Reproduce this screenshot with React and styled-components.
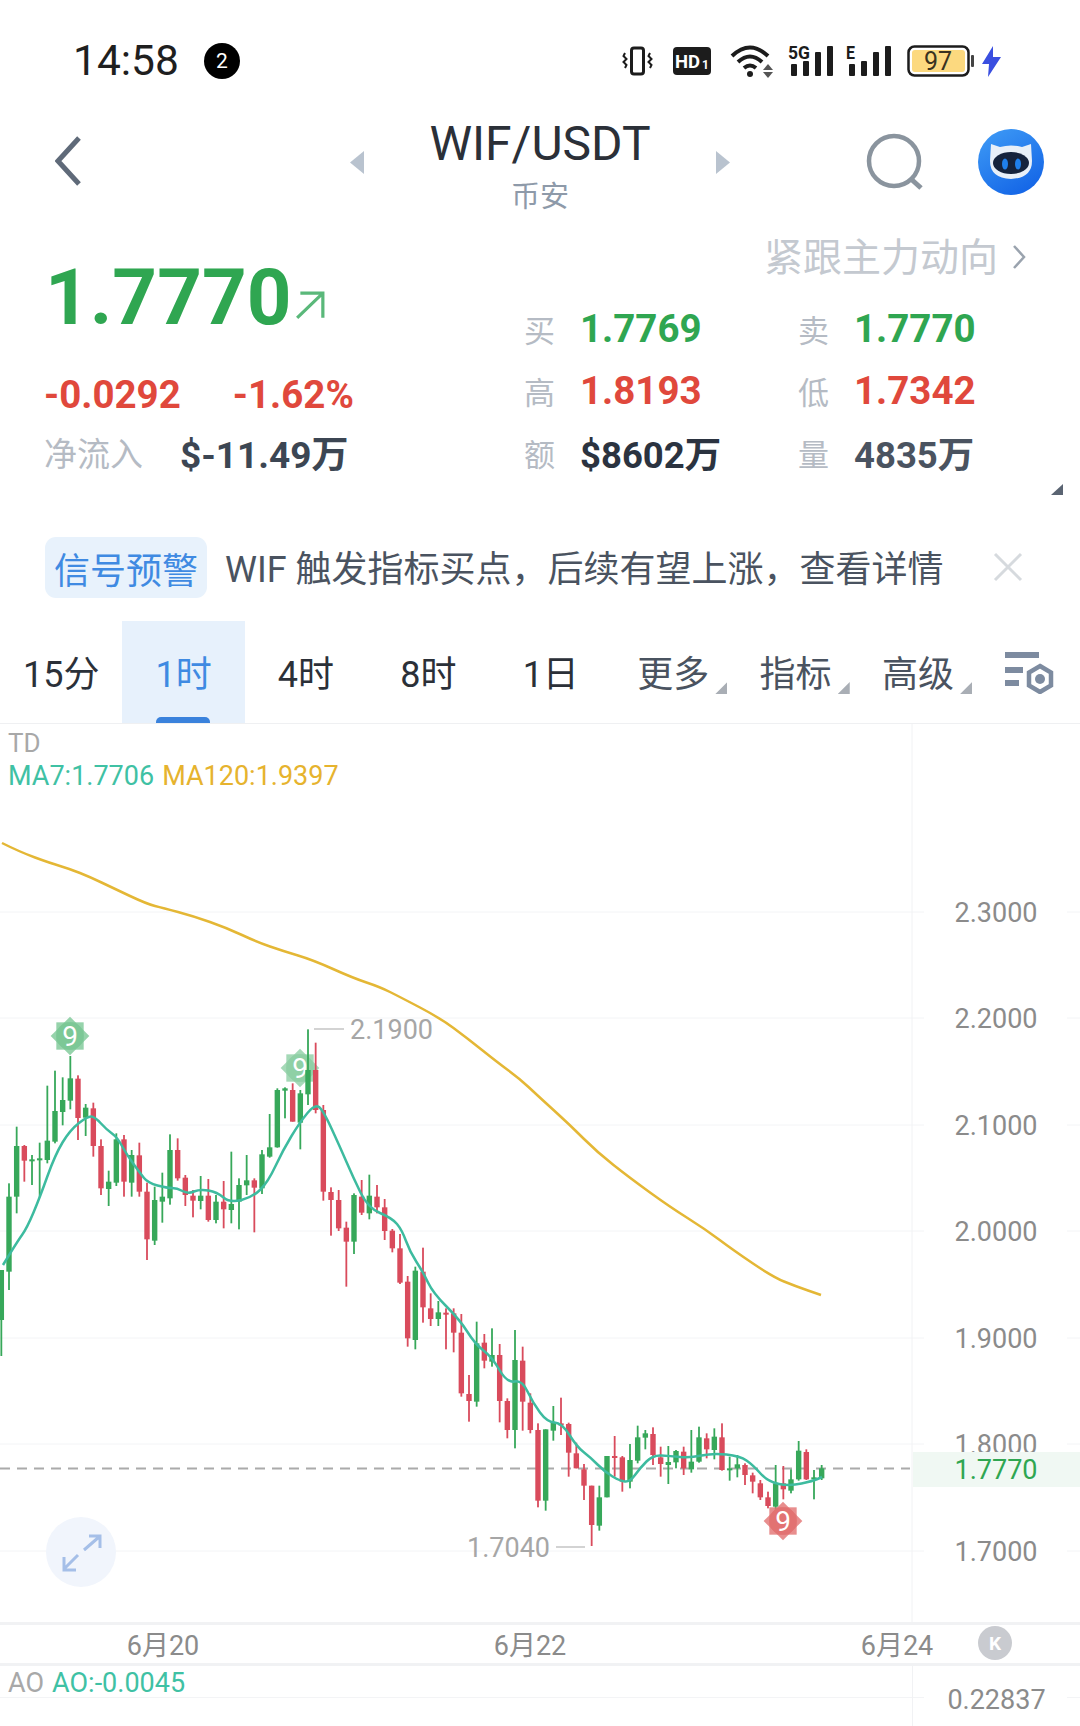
import React from "react";
import styled, { createGlobalStyle } from "styled-components";

const FONT = `Roboto, "Noto Sans CJK SC", sans-serif`;
const GREEN = "#2fa651";
const RED = "#e0483c";
const CANDLE_GREEN = "#37a85a";
const CANDLE_RED = "#d94b5c";

const GlobalStyle = createGlobalStyle`
    html, body {
        margin: 0;
        background: #fff;
        font-family: ${FONT};
    }
`;

// wick top, body top, body bottom, wick bottom, measured from the chart
const LEFT_CANDLES = [
    ["g", 810, 810, 960, 1068], ["g", 550, 590, 815, 870], ["g", 380, 438, 590, 640], ["r", 435, 438, 482, 545],
    ["g", 465, 478, 484, 555], ["g", 428, 475, 479, 590], ["g", 257, 422, 480, 490], ["g", 212, 333, 425, 430],
    ["g", 232, 300, 336, 376], ["g", 168, 235, 302, 328], ["r", 226, 236, 354, 420], ["g", 312, 323, 353, 408],
    ["r", 308, 325, 438, 470], ["r", 418, 438, 565, 585], ["g", 512, 545, 567, 618], ["g", 400, 418, 548, 558],
    ["r", 405, 418, 545, 590], ["g", 450, 465, 548, 590], ["r", 428, 466, 575, 590], ["r", 548, 575, 718, 780],
    ["g", 560, 600, 722, 735], ["g", 518, 590, 605, 668], ["g", 403, 450, 595, 614], ["r", 415, 450, 535, 542],
    ["r", 525, 533, 585, 618], ["r", 570, 587, 602, 652], ["g", 528, 587, 603, 628], ["r", 537, 587, 660, 665],
    ["g", 585, 605, 660, 670], ["r", 543, 605, 628, 685], ["g", 455, 612, 630, 670], ["g", 535, 555, 605, 688],
    ["g", 465, 541, 556, 585], ["r", 535, 541, 563, 697], ["g", 450, 463, 565, 582], ["g", 342, 442, 470, 473],
    ["g", 265, 270, 442, 443], ["g", 262, 265, 272, 355], ["r", 250, 270, 365, 365], ["g", 270, 280, 368, 448],
    ["g", 88, 210, 283, 315], ["r", 128, 210, 330, 340], ["r", 315, 330, 575, 602], ["r", 562, 576, 600, 707],
    ["r", 570, 600, 685, 693], ["r", 665, 683, 725, 860], ["g", 580, 585, 725, 762], ["r", 540, 590, 638, 645],
    ["g", 524, 587, 640, 658], ["r", 555, 590, 622, 640], ["r", 597, 622, 693, 720], ["r", 687, 692, 745, 757],
    ["r", 702, 745, 848, 852],
];

const RIGHT_CANDLES = [
    ["r", 168, 185, 355, 380], ["g", 140, 152, 360, 388], ["r", 83, 155, 262, 308], ["r", 220, 265, 297, 318],
    ["g", 243, 277, 297, 318], ["r", 265, 278, 281, 388], ["r", 265, 280, 338, 397], ["r", 282, 338, 520, 530],
    ["r", 465, 522, 543, 605], ["g", 305, 370, 545, 560], ["r", 342, 368, 422, 445], ["g", 325, 405, 425, 440],
    ["r", 372, 405, 543, 607], ["r", 535, 543, 630, 655], ["g", 330, 420, 630, 685], ["r", 380, 422, 545, 632],
    ["r", 520, 548, 630, 640], ["r", 610, 630, 842, 862], ["g", 628, 628, 842, 872], ["g", 558, 608, 632, 662],
    ["r", 533, 610, 615, 645], ["r", 608, 612, 698, 770], ["r", 668, 700, 745, 745], ["r", 732, 748, 797, 840],
    ["r", 797, 797, 915, 978], ["g", 797, 832, 917, 932], ["g", 708, 708, 832, 832], ["r", 648, 708, 712, 770],
    ["r", 708, 712, 785, 815], ["g", 672, 720, 785, 805], ["g", 617, 652, 722, 730], ["g", 630, 640, 653, 688],
    ["r", 622, 642, 705, 735], ["r", 680, 712, 732, 770], ["g", 678, 726, 735, 792], ["g", 690, 693, 727, 745],
    ["r", 680, 695, 745, 765], ["g", 630, 725, 748, 758], ["g", 620, 652, 725, 728], ["r", 640, 655, 688, 715],
    ["g", 625, 650, 690, 718], ["r", 610, 652, 750, 752], ["g", 710, 745, 748, 782], ["g", 705, 733, 745, 772],
    ["r", 730, 735, 765, 795], ["r", 758, 766, 785, 820], ["r", 780, 790, 832, 840], ["r", 815, 832, 858, 865],
    ["g", 735, 790, 860, 880], ["r", 738, 790, 808, 838], ["g", 748, 778, 812, 820], ["g", 663, 692, 778, 782],
    ["r", 688, 696, 778, 780], ["g", 750, 772, 775, 838], ["g", 735, 745, 775, 780],
];

const candles = [
    ...LEFT_CANDLES.map(c => ({ c, base: 1000 })),
    ...RIGHT_CANDLES.map(c => ({ c, base: 1220 })),
].map(({ c, base }, i) => ({
    x: (4 + 23 * i) / 3,
    color: c[0] === "g" ? CANDLE_GREEN : CANDLE_RED,
    wickTop: base + c[1] / 3,
    bodyTop: base + c[2] / 3,
    bodyBottom: base + c[3] / 3,
    wickBottom: base + c[4] / 3,
}));

const MA7_LINE = [
    [3, 1265], [17, 1242], [27, 1228], [40, 1197], [55, 1155], [70, 1130], [88, 1116], [95, 1117], [107, 1130],
    [117, 1137], [127, 1155], [140, 1173], [148, 1183], [167, 1188], [177, 1188], [188, 1194], [200, 1189],
    [217, 1192], [230, 1203], [253, 1197], [268, 1182], [283, 1150], [300, 1122], [315, 1104], [323, 1110],
    [340, 1147], [353, 1177], [368, 1208], [392, 1218], [402, 1230], [410, 1252], [423, 1272], [433, 1293],
    [460, 1320], [475, 1344], [492, 1357], [507, 1383], [522, 1380], [533, 1403], [547, 1422], [562, 1423],
    [577, 1447], [590, 1457], [605, 1472], [620, 1481], [630, 1482], [640, 1468], [653, 1455], [670, 1456],
    [690, 1458], [713, 1453], [740, 1456], [753, 1465], [768, 1482], [790, 1486], [813, 1481], [822, 1477],
];

const MA120_LINE = [
    [2, 843], [20, 852], [50, 863], [70, 869], [90, 877], [113, 888], [147, 904], [163, 908], [193, 916],
    [227, 928], [257, 942], [283, 951], [313, 960], [353, 978], [380, 987], [400, 997], [440, 1018], [467, 1038],
    [497, 1062], [520, 1079], [537, 1095], [570, 1125], [597, 1152], [630, 1178], [670, 1207], [705, 1229],
    [733, 1250], [773, 1277], [795, 1286], [821, 1295],
];

const PRICE_TICKS = [
    ["2.3000", 912], ["2.2000", 1018], ["2.1000", 1125], ["2.0000", 1231],
    ["1.9000", 1338], ["1.8000", 1444], ["1.7000", 1551],
];

const TABS = [
    { label: "15分" }, { label: "1时", active: true }, { label: "4时" }, { label: "8时" }, { label: "1日" },
    { label: "更多", menu: true }, { label: "指标", menu: true }, { label: "高级", menu: true },
];

// midpoint smoothing so the averages don't look like polylines
function smoothPath(points) {
    let d = `M${points[0][0]} ${points[0][1]}`;
    for (let i = 1; i < points.length - 1; i++) {
        const mx = (points[i][0] + points[i + 1][0]) / 2;
        const my = (points[i][1] + points[i + 1][1]) / 2;
        d += ` Q${points[i][0]} ${points[i][1]} ${mx} ${my}`;
    }
    const last = points[points.length - 1];
    return `${d} L${last[0]} ${last[1]}`;
}

const Page = styled.div`
    width: 1080px;
    height: 1726px;
    overflow: hidden;
    background: #fff;
    color: #2b3340;
`;

const StatusBar = styled.div`
    height: 122px;
    display: flex;
    align-items: center;
    padding: 0 79px 0 73px;
    box-sizing: border-box;
`;

const Time = styled.span`
    font-size: 42.5px;
    color: #1f1f1f;
    line-height: 1;
`;

const NotifyDot = styled.span`
    width: 36px;
    height: 36px;
    margin-left: 25px;
    border-radius: 50%;
    background: #000;
    color: #fff;
    font-size: 21px;
    display: flex;
    align-items: center;
    justify-content: center;
`;

const StatusIcons = styled.div`
    margin-left: auto;
    display: flex;
    align-items: center;
`;

const StatusIcon = styled.svg`
    display: block;
    margin-left: ${props => props.$gap || 0}px;
    font-family: ${FONT};
`;

const SignalGlyph = styled(StatusIcon)`
    margin-top: -6px;
`;

const Nav = styled.div`
    height: 103px;
    display: grid;
    grid-template-columns: 350px 380px 350px;
    align-items: start;
`;

const NavLeft = styled.div`
    padding: 14px 0 0 55px;
`;

const NavCenter = styled.div`
    display: flex;
    justify-content: space-between;
    align-items: center;
`;

const NavTriangle = styled.span`
    width: 14px;
    height: 23px;
    margin-top: -12px;
    background: #b9c3cf;
    clip-path: ${props => props.$right
        ? "polygon(0 0, 100% 50%, 0 100%)"
        : "polygon(100% 0, 0 50%, 100% 100%)"};
`;

const Market = styled.div`
    text-align: center;
    margin-top: -1px;
`;

const Pair = styled.div`
    font-size: 48px;
    line-height: 46px;
    color: #2b3038;
`;

const Exchange = styled.div`
    font-size: 29px;
    line-height: 36px;
    margin-top: 12px;
    color: #8e9aa9;
`;

const NavRight = styled.div`
    display: flex;
    justify-content: flex-end;
    padding: 7px 36px 0 0;
`;

const NavIcon = styled.svg`
    display: block;
    margin-left: ${props => props.$gap || 0}px;
`;

const Quote = styled.div`
    position: relative;
    height: 285px;
    display: grid;
    grid-template-columns: 524px 1fr;
`;

const Summary = styled.div`
    padding: 28px 0 0 46px;
`;

const PriceRow = styled.div`
    display: flex;
    align-items: flex-end;
    height: 90px;
`;

const Price = styled.span`
    font-size: 78px;
    line-height: 90px;
    font-weight: 700;
    color: ${GREEN};
    margin-left: -1px;
`;

const PriceArrow = styled.svg`
    display: block;
    margin: 0 0 23px 4px;
`;

const ChangeRow = styled.div`
    display: flex;
    gap: 52px;
    margin: 29px 0 0 -2px;
    font-size: 38.5px;
    line-height: 46px;
    font-weight: 700;
    color: ${RED};
`;

const FlowRow = styled.div`
    display: flex;
    align-items: center;
    margin: 12px 0 0 -2px;
    height: 44px;
`;

const FlowLabel = styled.span`
    font-size: 33px;
    width: 136px;
    color: #b5bbc4;
`;

const FlowValue = styled.span`
    font-size: 37px;
    font-weight: 700;
    color: #3c4653;
`;

const Detail = styled.div`
    display: flex;
    flex-direction: column;
`;

const FollowLink = styled.div`
    display: flex;
    align-items: center;
    justify-content: flex-end;
    padding: 5px 54px 0 0;
    height: 48px;
    gap: 14px;
    font-size: 39px;
    color: #c4c9d0;
`;

const FollowChevron = styled.svg`
    display: block;
    margin-top: 5px;
`;

const StatGrid = styled.div`
    display: grid;
    grid-template-columns: 56px 218px 56px 1fr;
    grid-auto-rows: 62px;
    align-items: center;
    margin-top: 19px;
`;

const StatLabel = styled.span`
    font-size: 31px;
    color: #b5bbc4;
`;

const StatValue = styled.span`
    font-size: ${props => props.$small ? 36.5 : 38.5}px;
    font-weight: 700;
    color: ${props => props.$color};
`;

const ExpandCorner = styled.span`
    position: absolute;
    right: 17px;
    bottom: 15px;
    width: 12px;
    height: 11px;
    background: #5a6472;
    clip-path: polygon(100% 0, 100% 100%, 0 100%);
`;

const SignalBar = styled.div`
    height: 61px;
    margin-top: 27px;
    padding: 0 57px 0 45px;
    display: flex;
    align-items: center;
`;

const SignalBadge = styled.span`
    width: 162px;
    height: 61px;
    border-radius: 11px;
    background: #e8f2fc;
    color: #3f8ae2;
    font-size: 36px;
    display: flex;
    align-items: center;
    justify-content: center;
    white-space: nowrap;
`;

const SignalText = styled.span`
    margin-left: 18px;
    padding-bottom: 4px;
    font-size: 36px;
    color: #4a5360;
    white-space: nowrap;
`;

const SignalClose = styled.svg`
    display: block;
    margin: -2px 0 0 auto;
`;

const TabBar = styled.div`
    height: 102px;
    margin-top: 23px;
    display: flex;
    align-items: stretch;
    border-bottom: 1px solid #eff0f2;
`;

const Tab = styled.div`
    position: relative;
    width: 122.4px;
    padding-bottom: 3px;
    box-sizing: border-box;
    display: flex;
    align-items: center;
    justify-content: center;
    font-size: 36px;
    color: ${props => props.$active ? "#3f8ae2" : props.$menu ? "#4a5360" : "#2b3038"};
    background: ${props => props.$active ? "#e7f1fc" : "transparent"};
`;

const TabMarker = styled.span`
    position: absolute;
    left: 34px;
    bottom: 0;
    width: 54px;
    height: 6px;
    border-radius: 5px 5px 0 0;
    background: #3a82dc;
`;

const TabCorner = styled.span`
    position: absolute;
    right: 7px;
    bottom: 29px;
    width: 12px;
    height: 12px;
    background: #a9aeb5;
    clip-path: polygon(100% 0, 100% 100%, 0 100%);
`;

const ChartSettings = styled.svg`
    display: block;
    align-self: center;
    margin: 2px 0 0 26px;
`;

const ChartArea = styled.div`
    position: relative;
    height: 898px;
`;

const ChartSvg = styled.svg`
    display: block;
    font-family: ${FONT};
`;

const Legend = styled.div`
    position: absolute;
    left: 8px;
    top: 3px;
    font-size: 27px;
    line-height: 33px;
`;

const LegendTitle = styled.div`
    color: #a8a8a8;
    font-size: 26px;
`;

const LegendValue = styled.span`
    color: ${props => props.$color};
    margin-right: 8px;
`;

const ExpandButton = styled.div`
    position: absolute;
    left: 46px;
    top: 793px;
    width: 70px;
    height: 70px;
    border-radius: 50%;
    background: #f1f5fc;
`;

const TimeAxis = styled.div`
    height: 36px;
    border-top: 3px solid #f1f2f4;
    border-bottom: 3px solid #f1f2f4;
    padding: 0 0 2px 118px;
    box-sizing: content-box;
    margin-bottom: -2px;
    display: flex;
    align-items: center;
    gap: 277px;
`;

const TimeLabel = styled.span`
    width: 90px;
    flex: none;
    text-align: center;
    font-size: 27px;
    color: #8b8b8b;
    white-space: nowrap;
`;

const KButton = styled.span`
    flex: none;
    width: 34px;
    height: 34px;
    margin-left: -241px;
    border-radius: 50%;
    background: #c9cbd0;
    color: #fff;
    font-size: 19px;
    font-weight: 700;
    display: flex;
    align-items: center;
    justify-content: center;
`;

const AoPanel = styled.div`
    position: relative;
    height: 62px;
    display: grid;
    grid-template-columns: 912px 1fr;
`;

const AoRule = styled.span`
    position: absolute;
    top: 33px;
    left: ${props => props.$left}px;
    width: ${props => props.$width}px;
    height: 1px;
    background: #f3f4f6;
`;

const AoLegend = styled.div`
    padding: 2px 0 0 8px;
    font-size: 27px;
    line-height: 34px;
    color: #a8a8a8;
`;

const AoValue = styled.span`
    color: #3fc1a4;
    margin-left: 8px;
`;

const AoAxis = styled.div`
    border-left: 1px solid #f1f2f4;
    padding-top: 19px;
    text-align: center;
    font-size: 27px;
    line-height: 34px;
    color: #8b8b8b;
    position: relative;
`;

function VibrateIcon() {
    return (
        <StatusIcon width="31" height="33" viewBox="0 0 31 33">
            <rect x="9.5" y="3" width="12" height="26" rx="2.5" fill="none" stroke="#1c1c1c" strokeWidth="3" />
            <path d="M3 8 l-1.5 3 3 3 -3 3 3 3 -1.5 3" fill="none" stroke="#1c1c1c" strokeWidth="2" />
            <path d="M28 8 l-1.5 3 3 3 -3 3 3 3 -1.5 3" fill="none" stroke="#1c1c1c" strokeWidth="2" />
        </StatusIcon>
    );
}

function HdIcon() {
    return (
        <StatusIcon $gap={20} width="38" height="28" viewBox="0 0 38 28">
            <rect width="38" height="28" rx="4" fill="#1c1c1c" />
            <text x="2" y="21" fontSize="18.5" fontWeight="700" fill="#fff">HD</text>
            <text x="29" y="22" fontSize="12" fontWeight="700" fill="#fff">1</text>
        </StatusIcon>
    );
}

function WifiIcon() {
    return (
        <StatusIcon $gap={19} width="43" height="34" viewBox="0 0 43 34">
            <path d="M2 12 Q20 -5 38 12" fill="none" stroke="#1c1c1c" strokeWidth="4" />
            <path d="M8 18 Q20 7 32 18" fill="none" stroke="#1c1c1c" strokeWidth="4" />
            <path d="M14 24 Q20 19 26 24" fill="none" stroke="#1c1c1c" strokeWidth="4" />
            <circle cx="20" cy="30" r="3" fill="#1c1c1c" />
            <path d="M33 26 l5 -6 5 6z" fill="#555" />
            <path d="M33 28 l5 6 5 -6z" fill="#555" />
        </StatusIcon>
    );
}

function SignalIcon({ label, gap, width }) {
    const bars = [[3, 20], [15, 17], [27, 8], [39, 2]];
    return (
        <SignalGlyph $gap={gap} width={width} height="40" viewBox={`0 -6 ${width} 40`}>
            <text x="0" y="15" fontSize="19" fontWeight="700" fill="#1c1c1c" textLength={label === "E" ? 9 : 22} lengthAdjust="spacingAndGlyphs">{label}</text>
            {bars.map(([x, top]) => (
                <rect key={x} x={x} y={top} width="6" height={32 - top} rx="1" fill="#1c1c1c" />
            ))}
        </SignalGlyph>
    );
}

function BatteryIcon() {
    return (
        <StatusIcon $gap={15} width="67" height="32" viewBox="0 0 67 32">
            <rect x="1.5" y="1.5" width="60" height="29" rx="6" fill="#fff" stroke="#1c1c1c" strokeWidth="2.5" />
            <rect x="5" y="5" width="53" height="22" rx="3" fill="#fcd97f" />
            <rect x="64" y="10" width="3" height="12" rx="1" fill="#444" />
            <text x="31" y="25" fontSize="25" textAnchor="middle" fill="#3a3320">97</text>
        </StatusIcon>
    );
}

function BoltIcon() {
    return (
        <StatusIcon $gap={8} width="19" height="31" viewBox="0 0 19 31">
            <path d="M11 0 L0 18 H7 L6 31 L19 11 H11z" fill="#3a4fe0" />
        </StatusIcon>
    );
}

function BackIcon() {
    return (
        <NavIcon width="26" height="50" viewBox="0 0 26 50">
            <path d="M24 2 L3 25 L24 48" fill="none" stroke="#5f6a79" strokeWidth="5" />
        </NavIcon>
    );
}

function SearchIcon() {
    return (
        <NavIcon width="60" height="70" viewBox="0 0 60 70">
            <circle cx="28" cy="32" r="25" fill="none" stroke="#8a949e" strokeWidth="4.5" />
            <path d="M45 50 L55 59" fill="none" stroke="#8a949e" strokeWidth="5" />
        </NavIcon>
    );
}

function RobotAvatar() {
    return (
        <NavIcon $gap={52} width="66" height="66" viewBox="0 0 66 66">
            <defs>
                <linearGradient id="avatarFill" x1="0.2" y1="0" x2="0.8" y2="1">
                    <stop offset="0" stopColor="#3c98f5" />
                    <stop offset="1" stopColor="#1263e6" />
                </linearGradient>
            </defs>
            <circle cx="33" cy="33" r="33" fill="url(#avatarFill)" />
            <path d="M13 15 L22 18 Q33 15 44 18 L53 15 L54 32 Q54 49 33 50 Q12 49 12 32z" fill="#e8eff8" />
            <ellipse cx="33" cy="34" rx="18" ry="11" fill="#15233d" />
            <ellipse cx="27" cy="35" rx="3" ry="5.5" fill="#1f80ec" />
            <ellipse cx="40" cy="35" rx="3" ry="5.5" fill="#1f80ec" />
        </NavIcon>
    );
}

function NineBadge({ x, y, size, color, opacity }) {
    const half = size * 0.72;
    return (
        <g opacity={opacity}>
            <rect x={x - half} y={y - half} width={half * 2} height={half * 2} fill={color} opacity="0.8" />
            <rect x={x - half} y={y - half} width={half * 2} height={half * 2} fill={color} opacity="0.8" transform={`rotate(45 ${x} ${y})`} />
            <circle cx={x} cy={y} r={size * 0.72} fill={color} />
            <text x={x} y={y + 10} fontSize="28" textAnchor="middle" fill="#fff">9</text>
        </g>
    );
}

function Chart() {
    return (
        <ChartSvg width="1080" height="898" viewBox="0 724 1080 898">
            {PRICE_TICKS.map(([, y]) => (
                <g key={y} stroke="#f3f4f6" strokeWidth="1">
                    <line x1="0" x2="924" y1={y} y2={y} />
                    <line x1="1067" x2="1080" y1={y} y2={y} />
                </g>
            ))}
            <line x1="912" x2="912" y1="724" y2="1622" stroke="#f1f2f4" />
            {PRICE_TICKS.map(([label, y]) => (
                <text key={label} x="996" y={y + 10} fontSize="27" textAnchor="middle" fill="#8b8b8b">{label}</text>
            ))}
            <rect x="913" y="1452" width="167" height="35" fill="#f0f8f3" />
            <text x="996" y="1479" fontSize="27" textAnchor="middle" fill={GREEN}>1.7770</text>
            <line x1="0" x2="910" y1="1468.5" y2="1468.5" stroke="#aaa" strokeWidth="1.8" strokeDasharray="10 7" />

            <NineBadge x={70} y={1036} size={19} color="#7cc896" />
            <NineBadge x={300} y={1068} size={19} color="#7cc896" opacity="0.85" />
            {candles.map(c => (
                <g key={c.x} fill={c.color}>
                    <rect x={c.x - 0.9} y={c.wickTop} width="1.8" height={c.wickBottom - c.wickTop} />
                    <rect x={c.x - 2.7} y={c.bodyTop} width="5.4" height={Math.max(c.bodyBottom - c.bodyTop, 2)} />
                </g>
            ))}
            <NineBadge x={783} y={1521} size={19} color="#e27272" />

            <path d={smoothPath(MA120_LINE)} fill="none" stroke="#e4b735" strokeWidth="2.5" />
            <path d={smoothPath(MA7_LINE)} fill="none" stroke="#3dbb9f" strokeWidth="2.5" />

            <line x1="314" x2="344" y1="1029" y2="1029" stroke="#c4c4c4" strokeWidth="1.5" />
            <text x="350" y="1039" fontSize="27" fill="#a6a6a6">2.1900</text>
            <text x="467" y="1557" fontSize="27" fill="#a6a6a6">1.7040</text>
            <line x1="556" x2="585" y1="1547" y2="1547" stroke="#c4c4c4" strokeWidth="1.5" />
        </ChartSvg>
    );
}

function App() {
    return (
        <Page>
            <GlobalStyle />
            <StatusBar>
                <Time>14:58</Time>
                <NotifyDot>2</NotifyDot>
                <StatusIcons>
                    <VibrateIcon />
                    <HdIcon />
                    <WifiIcon />
                    <SignalIcon label="5G" gap={15} width={46} />
                    <SignalIcon label="E" gap={12} width={46} />
                    <BatteryIcon />
                    <BoltIcon />
                </StatusIcons>
            </StatusBar>

            <Nav>
                <NavLeft><BackIcon /></NavLeft>
                <NavCenter>
                    <NavTriangle />
                    <Market>
                        <Pair>WIF/USDT</Pair>
                        <Exchange>币安</Exchange>
                    </Market>
                    <NavTriangle $right />
                </NavCenter>
                <NavRight>
                    <SearchIcon />
                    <RobotAvatar />
                </NavRight>
            </Nav>

            <Quote>
                <Summary>
                    <PriceRow>
                        <Price>1.7770</Price>
                        <PriceArrow width="30" height="30" viewBox="0 0 28 28">
                            <path d="M2 26 L26 3 M5 3 H26 V26" fill="none" stroke="#5ab87a" strokeWidth="3" />
                        </PriceArrow>
                    </PriceRow>
                    <ChangeRow>
                        <span>-0.0292</span>
                        <span>-1.62%</span>
                    </ChangeRow>
                    <FlowRow>
                        <FlowLabel>净流入</FlowLabel>
                        <FlowValue>$-11.49万</FlowValue>
                    </FlowRow>
                </Summary>
                <Detail>
                    <FollowLink>
                        紧跟主力动向
                        <FollowChevron width="14" height="26" viewBox="0 0 14 26">
                            <path d="M2 2 L12 13 L2 24" fill="none" stroke="#9aa3ae" strokeWidth="2.5" />
                        </FollowChevron>
                    </FollowLink>
                    <StatGrid>
                        <StatLabel>买</StatLabel><StatValue $color={GREEN}>1.7769</StatValue>
                        <StatLabel>卖</StatLabel><StatValue $color={GREEN}>1.7770</StatValue>
                        <StatLabel>高</StatLabel><StatValue $color={RED}>1.8193</StatValue>
                        <StatLabel>低</StatLabel><StatValue $color={RED}>1.7342</StatValue>
                        <StatLabel>额</StatLabel><StatValue $small $color="#2b3340">$8602万</StatValue>
                        <StatLabel>量</StatLabel><StatValue $small $color="#4a5360">4835万</StatValue>
                    </StatGrid>
                </Detail>
                <ExpandCorner />
            </Quote>

            <SignalBar>
                <SignalBadge>信号预警</SignalBadge>
                <SignalText>WIF 触发指标买点，后续有望上涨，查看详情</SignalText>
                <SignalClose width="30" height="30" viewBox="0 0 30 30">
                    <path d="M2 2 L28 28 M28 2 L2 28" fill="none" stroke="#d6dade" strokeWidth="3" />
                </SignalClose>
            </SignalBar>

            <TabBar>
                {TABS.map(tab => (
                    <Tab key={tab.label} $active={tab.active} $menu={tab.menu}>
                        {tab.label}
                        {tab.active && <TabMarker />}
                        {tab.menu && <TabCorner />}
                    </Tab>
                ))}
                <ChartSettings width="50" height="42" viewBox="0 0 50 42">
                    <g fill="#7d8ba0">
                        <rect x="0" y="0" width="34" height="6" />
                        <rect x="0" y="15" width="18" height="6" />
                        <rect x="0" y="28" width="14" height="6" />
                    </g>
                    <path d="M35 14 L46 20.5 V33.5 L35 40 L24 33.5 V20.5z" fill="none" stroke="#7d8ba0" strokeWidth="4.5" />
                    <circle cx="35" cy="27" r="5" fill="#7d8ba0" />
                </ChartSettings>
            </TabBar>

            <ChartArea>
                <Chart />
                <Legend>
                    <LegendTitle>TD</LegendTitle>
                    <LegendValue $color="#3fc1a4">MA7:1.7706</LegendValue>
                    <LegendValue $color="#e6b32e">MA120:1.9397</LegendValue>
                </Legend>
                <ExpandButton>
                    <svg width="70" height="70" viewBox="0 0 70 70">
                        <path d="M38 33 L53 20 M43 19 H54 V31 M32 38 L18 52 M18 40 V53 H30" fill="none" stroke="#a5bfe8" strokeWidth="3" />
                    </svg>
                </ExpandButton>
            </ChartArea>

            <TimeAxis>
                <TimeLabel>6月20</TimeLabel>
                <TimeLabel>6月22</TimeLabel>
                <TimeLabel>6月24</TimeLabel>
                <KButton>K</KButton>
            </TimeAxis>

            <AoPanel>
                <AoRule $left={0} $width={924} />
                <AoRule $left={1067} $width={13} />
                <AoLegend>AO<AoValue>AO:-0.0045</AoValue></AoLegend>
                <AoAxis>0.22837</AoAxis>
            </AoPanel>
        </Page>
    );
}

export default App;
